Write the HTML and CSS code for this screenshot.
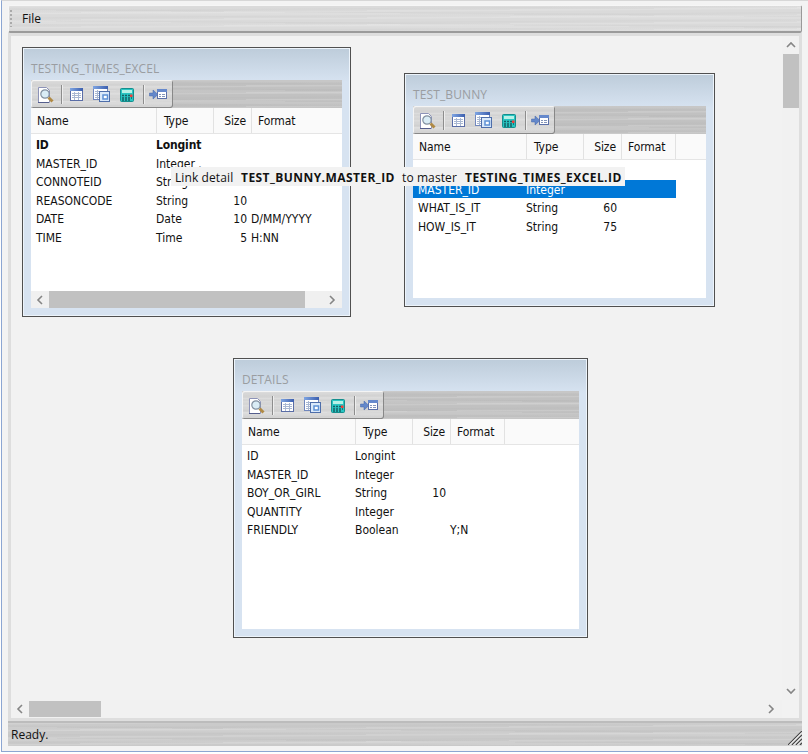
FILE: index.html
```
<!DOCTYPE html>
<html lang="en">
<head>
<meta charset="utf-8">
<title>Table links</title>
<link rel="stylesheet" href="styles.css">
</head>
<body>
<svg class="defs" aria-hidden="true">
  <defs>
    <linearGradient id="bar" x1="0" y1="0" x2="1" y2="0"><stop offset="0" stop-color="#7fa5e2"/><stop offset="1" stop-color="#3c5fae"/></linearGradient>
    <symbol id="tools" viewBox="0 0 142 28">
      <path d="M7.500 7.500h8l3 3v12h-11z" fill="#fff" stroke="#8d93b8"/>
      <path d="M7 22.500h11" stroke="#555e8c"/>
      <circle cx="14" cy="14" r="4.200" fill="#d9ecf5" stroke="#8290a0" stroke-width="1.200"/>
      <path d="M17.500 17.500l4 4" stroke="#b08a45" stroke-width="3"/>
      <path d="M30.500 5v19M112.500 5v19" stroke="#8d8d8d"/>
      <path d="M31.500 5v19M113.500 5v19" stroke="#eee"/>
      <rect x="39.500" y="8.500" width="12" height="12" fill="#fff" stroke="#5a6da6"/>
      <rect x="39" y="8" width="13" height="3" fill="url(#bar)"/>
      <path d="M41 13.500h9M41 15.500h9M41 17.500h9M43.500 12v8M47.500 12v8" stroke="#a9b8d3"/>
      <rect x="62.500" y="6.500" width="14" height="13" fill="#fff" stroke="#7187bd"/>
      <rect x="62" y="6" width="15" height="3" fill="url(#bar)"/>
      <path d="M64 11.500h11M64 13.500h6M64 15.500h6M64 17.500h6M66.500 10v9" stroke="#a9b8d3"/>
      <rect x="68.500" y="11.500" width="10" height="10" fill="#dae9fa" stroke="#4e6eaa"/>
      <rect x="72" y="15" width="4.500" height="4" fill="#fff" stroke="#5e91d5" stroke-width="1.500"/>
      <rect x="89.500" y="8.500" width="13" height="13" rx="1" fill="#28c5c2" stroke="#148e8d"/>
      <rect x="91" y="10" width="10" height="3" fill="#b7f1e7"/>
      <path d="M91 15.500h2m1 0h2m1 0h2M91 18h2m1 0h2m1 0h2m1 0h1M91 20h2m1 0h2m1 0h2" stroke="#145f64" stroke-width="1.300"/>
      <rect x="99" y="14.500" width="2.500" height="2.500" fill="#ef3d38"/>
      <path d="M118.500 13h3.500v-3l5 4.500-5 4.500v-3h-3.500z" fill="#6488ca" stroke="#4264a9" stroke-width=".5"/>
      <rect x="126.500" y="9.500" width="9" height="9" fill="#fff" stroke="#5b70a9"/>
      <rect x="126" y="9" width="10" height="3" fill="#6689cc"/>
      <path d="M128 14.500h2m1 0h3M128 16.500h2m1 0h3" stroke="#8294ba"/>
    </symbol>
    <symbol id="chev" viewBox="0 0 10 10"><path d="M7 1L3 5l4 4" fill="none" stroke="#858585" stroke-width="1.600"/></symbol>
  </defs>
</svg>
<div class="app">
  <header class="menubar metal"><span class="grip"></span><span class="menu">File</span></header>
  <main class="workspace">
    <section class="win win-times">
      <h2>TESTING_TIMES_EXCEL</h2>
      <div class="tools metal"><div class="group metal"><svg><use href="#tools"/></svg></div></div>
      <div class="grid head"><span>Name</span><span>Type</span><span>Size</span><span>Format</span></div>
      <div class="rows">
        <div class="grid row key"><span>ID</span><span>Longint</span></div>
        <div class="grid row"><span>MASTER_ID</span><span>Integer .</span></div>
        <div class="grid row"><span>CONNOTEID</span><span>String</span></div>
        <div class="grid row"><span>REASONCODE</span><span>String</span><span>10</span></div>
        <div class="grid row"><span>DATE</span><span>Date</span><span>10</span><span>D/MM/YYYY</span></div>
        <div class="grid row"><span>TIME</span><span>Time</span><span>5</span><span>H:NN</span></div>
      </div>
      <div class="scroll"><svg><use href="#chev"/></svg><i></i><svg class="right"><use href="#chev"/></svg></div>
    </section>
    <section class="win win-bunny">
      <h2>TEST_BUNNY</h2>
      <div class="tools metal"><div class="group metal"><svg><use href="#tools"/></svg></div></div>
      <div class="grid head"><span>Name</span><span>Type</span><span>Size</span><span>Format</span></div>
      <div class="rows">
        <div class="grid row"></div>
        <div class="grid row selected"><span>MASTER_ID</span><span>Integer</span></div>
        <div class="grid row"><span>WHAT_IS_IT</span><span>String</span><span>60</span></div>
        <div class="grid row"><span>HOW_IS_IT</span><span>String</span><span>75</span></div>
      </div>
    </section>
    <section class="win win-details">
      <h2>DETAILS</h2>
      <div class="tools metal"><div class="group metal"><svg><use href="#tools"/></svg></div></div>
      <div class="grid head"><span>Name</span><span>Type</span><span>Size</span><span>Format</span></div>
      <div class="rows">
        <div class="grid row"><span>ID</span><span>Longint</span></div>
        <div class="grid row"><span>MASTER_ID</span><span>Integer</span></div>
        <div class="grid row"><span>BOY_OR_GIRL</span><span>String</span><span>10</span></div>
        <div class="grid row"><span>QUANTITY</span><span>Integer</span></div>
        <div class="grid row"><span>FRIENDLY</span><span>Boolean</span><span></span><span>Y;N</span></div>
      </div>
    </section>
    <div class="hint"><span>Link detail</span><b>TEST_BUNNY.MASTER_ID</b><span>to master</span><b>TESTING_TIMES_EXCEL.ID</b></div>
    <div class="vscroll"><svg class="up"><use href="#chev"/></svg><i></i><svg class="down"><use href="#chev"/></svg></div>
    <div class="hscroll"><svg><use href="#chev"/></svg><i></i><svg class="right"><use href="#chev"/></svg></div>
  </main>
  <footer class="status metal"><span>Ready.</span>
    <svg class="resize" viewBox="0 0 14 14"><path d="M0 14L14 0M4 14L14 4M8 14l6-6M12 14l2-2" stroke="#444" stroke-width="1.200"/><path d="M1.500 14L14 1.500M5.500 14L14 5.500M9.500 14L14 9.500" stroke="#fff"/></svg>
  </footer>
</div>
</body>
</html>
```
FILE: styles.css
```
* { box-sizing: border-box; }
body { margin: 0; width: 808px; height: 754px; overflow: hidden; background: #fff; color: #111; font: 12px "Open Sans", sans-serif; }
svg { display: block; flex: none; }
.defs { position: absolute; width: 0; height: 0; }
.app { height: 752px; margin-left: 1px; border: solid #8ca6d2; border-width: 0 0 1px 1px; padding: 4px 6px 5px; background: #f3f3f3; display: flex; flex-direction: column; border-top: 1px solid #d7d7d7; }
.metal {
  background-image:
    repeating-linear-gradient(179.6deg, rgba(255,255,255,.14) 0 1px, transparent 2px 4px, rgba(110,110,110,.04) 5px, transparent 7px),
    repeating-linear-gradient(180.5deg, rgba(255,255,255,.1) 0 2px, transparent 4px 9px, rgba(110,110,110,.04) 10px, transparent 11px);
}
.menubar { flex: none; width: 794px; height: 28px; background-color: #dadada; border: 1px solid #f6f6f6; border-right: 1px solid #999; border-bottom: 2px solid #9b9b9b; border-radius: 2px; display: flex; align-items: center; }
.grip { width: 2px; height: 17px; margin: 0 10px 0 1px; background: repeating-linear-gradient(#aaa 0 2px, transparent 2px 4px); }
.menu { line-height: 24px; padding-top: 1px; }
.workspace { position: relative; flex: none; width: 794px; height: 688px; border: 3px solid #dedede; background: #f2f2f2; }
.win { position: absolute; border: 1px solid #505050; box-shadow: inset 0 0 0 1px #edf4fb; padding: 1px 8px 8px; background: linear-gradient(#bdccda, #d7e3f1 34px) #d7e3f1; display: flex; flex-direction: column; }
.win-times { left: 11px; top: 11px; width: 329px; height: 270px; --name: 126px; --edge: transparent; }
.win-bunny { left: 393px; top: 37px; width: 311px; height: 234px; --name: 114px; --edge: #e2e2e2; }
.win-details { left: 222px; top: 322px; width: 355px; height: 280px; --name: 114px; --edge: #e2e2e2; }
h2 { flex: none; margin: 0; height: 31px; padding-top: 11px; font-size: 12px; font-weight: 400; line-height: 18px; letter-spacing: .12px; color: #9a9da1; }
.tools { flex: none; height: 28px; background-color: #c1c1c1; }
.group { width: 142px; height: 28px; background-color: #d6d6d6; border-radius: 2px; box-shadow: inset 1px 1px #f4f4f4, inset -1px -1px #888; }
.group svg { width: 142px; height: 28px; }
.grid { display: grid; grid-template-columns: var(--name) 57px 38px 54px; flex: none; }
.head { height: 26px; background: #fafafa; border-bottom: 1px solid #e5e5e5; line-height: 27px; font-family: "DejaVu Sans Condensed", "DejaVu Sans", sans-serif; font-size: 12px; letter-spacing: -.1px; }
.head span { height: 25px; padding-left: 7px; border-right: 1px solid #e2e2e2; }
.head span:first-child { padding-left: 6px; }
.head span:nth-child(3) { padding: 0 5px 0 0; text-align: right; }
.head span:nth-child(4) { padding-left: 6px; border-color: var(--edge); }
.rows { flex: 1; background: #fff; padding-top: 1px; font-family: "DejaVu Sans Condensed", "DejaVu Sans", sans-serif; font-size: 12px; }
.row { height: 18.5px; line-height: 20.5px; white-space: nowrap; }
.row span { margin-left: -1px; }
.row span:first-child { padding-left: 6px; }
.row span:nth-child(3) { padding-right: 5px; text-align: right; }
.key { font-weight: 700; }
.key span { letter-spacing: -.15px; }
.selected { width: 263px; background: #0078d7; color: #fff; }
.scroll { height: 17px; flex: none; display: flex; align-items: center; background: #f0f0f0; padding: 0 5px 0 4px; }
.scroll svg, .hscroll svg, .vscroll svg { width: 10px; height: 10px; }
.scroll i { width: 256px; height: 17px; margin-left: 4px; background: #c1c1c1; }
.right { transform: rotate(180deg); margin-left: auto; }
.hint { position: absolute; left: 160px; top: 131px; width: 454px; height: 19px; padding-left: 4px; background: #f2f2f2; line-height: 21px; white-space: pre; display: grid; grid-template-columns: 66px 161px 63px auto; }
.hint span { letter-spacing: .1px; }
.hint b { letter-spacing: .43px; }
.vscroll { position: absolute; right: 0; top: 0; width: 17px; height: 664px; background: #f1f1f1; display: flex; flex-direction: column; align-items: center; padding: 4px 0; }
.vscroll i { width: 16px; height: 54px; margin-top: 4px; background: #c1c1c1; }
.up { transform: rotate(90deg); }
.down { transform: rotate(-90deg); margin-top: auto; }
.hscroll { position: absolute; left: 0; bottom: 0; width: 771px; height: 18px; background: #f1f1f1; display: flex; align-items: center; padding: 0 6px 0 4px; }
.hscroll i { width: 72px; height: 16px; margin-left: 4px; background: #c1c1c1; }
.status { position: relative; width: 794px; height: 25px; flex: none; background-color: #cacaca; border-top: 2px solid #bcbcbc; padding-left: 3px; line-height: 23px; }
.resize { position: absolute; right: 0; bottom: 1px; width: 14px; height: 14px; }
```
